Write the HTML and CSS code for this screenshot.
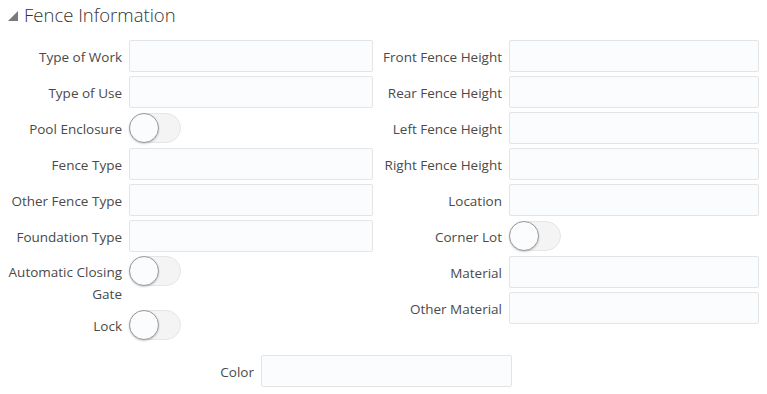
FILE: index.html
```html
<!DOCTYPE html>
<html lang="en">
<head>
    <meta charset="UTF-8">
    <meta name="viewport" content="width=device-width, initial-scale=1.0">
    <title>Fence Information</title>
    <link rel="stylesheet" href="styles.css">
</head>
<body>
    <div class="section">
        <h2 class="section-title"><span class="disclosure"></span>Fence Information</h2>
        <div class="columns">
            <div class="column left">
                <div class="field"><label>Type of Work</label><input type="text"></div>
                <div class="field"><label>Type of Use</label><input type="text"></div>
                <div class="field"><label>Pool Enclosure</label><span class="switch"><span class="knob"></span></span></div>
                <div class="field"><label>Fence Type</label><input type="text"></div>
                <div class="field"><label>Other Fence Type</label><input type="text"></div>
                <div class="field"><label>Foundation Type</label><input type="text"></div>
                <div class="field tall"><label>Automatic Closing Gate</label><span class="switch"><span class="knob"></span></span></div>
                <div class="field"><label>Lock</label><span class="switch"><span class="knob"></span></span></div>
            </div>
            <div class="column right">
                <div class="field"><label>Front Fence Height</label><input type="text"></div>
                <div class="field"><label>Rear Fence Height</label><input type="text"></div>
                <div class="field"><label>Left Fence Height</label><input type="text"></div>
                <div class="field"><label>Right Fence Height</label><input type="text"></div>
                <div class="field"><label>Location</label><input type="text"></div>
                <div class="field"><label>Corner Lot</label><span class="switch"><span class="knob"></span></span></div>
                <div class="field"><label>Material</label><input type="text"></div>
                <div class="field"><label>Other Material</label><input type="text"></div>
            </div>
        </div>
        <div class="field color-row"><label>Color</label><input type="text"></div>
    </div>
</body>
</html>
```
FILE: styles.css
```css
body {
    margin: 0;
    font-family: "Open Sans", "Noto Sans", Arial, sans-serif;
    color: #4a4a4a;
    background: #fff;
}

.section-title {
    margin: 0;
    height: 28px;
    display: flex;
    align-items: center;
    font-size: 18.5px;
    font-weight: 300;
    color: #333;
    padding-left: 8px;
}

.disclosure {
    width: 0;
    height: 0;
    border-left: 10px solid transparent;
    border-bottom: 10px solid #7a7a7a;
    margin-right: 6px;
    margin-top: 3px;
}

.columns {
    display: flex;
    margin-top: 12px;
}

.column {
    display: flex;
    flex-direction: column;
    gap: 4px;
}

.column.left {
    width: 380px;
}

.column.left label {
    width: 122px;
}

.column.left input {
    width: 244px;
}

.column.right label {
    width: 122px;
}

.column.right input {
    width: 250px;
}

.field {
    display: flex;
    align-items: center;
    min-height: 32px;
}

.field label {
    flex: none;
    text-align: right;
    font-size: 13.5px;
    line-height: 22px;
    margin-right: 7px;
    padding-top: 2px;
    color: #4a4a4a;
}

.field.tall {
    align-items: flex-start;
    min-height: 49px;
}

.field.tall label {
    padding-top: 5px;
}

input {
    box-sizing: border-box;
    height: 32px;
    border: 1px solid #e3e4e6;
    border-radius: 2px;
    background: #fbfcfd;
    padding: 0 8px;
    margin: 0;
}

.switch {
    position: relative;
    display: inline-block;
    width: 52px;
    height: 30px;
    box-sizing: border-box;
    border: 1px solid #e6e6e6;
    border-radius: 15px;
    background: #f4f4f4;
}

.knob {
    position: absolute;
    left: -1px;
    top: -1px;
    width: 30px;
    height: 30px;
    box-sizing: border-box;
    border-radius: 50%;
    border: 1.5px solid #9a9a9a;
    background: #fbfcfe;
    box-shadow: 0 1px 2px rgba(0, 0, 0, 0.2);
}

.color-row {
    margin-top: 14px;
    padding-left: 133px;
}

.color-row label {
    width: 121px;
}

.color-row input {
    width: 251px;
}
```
